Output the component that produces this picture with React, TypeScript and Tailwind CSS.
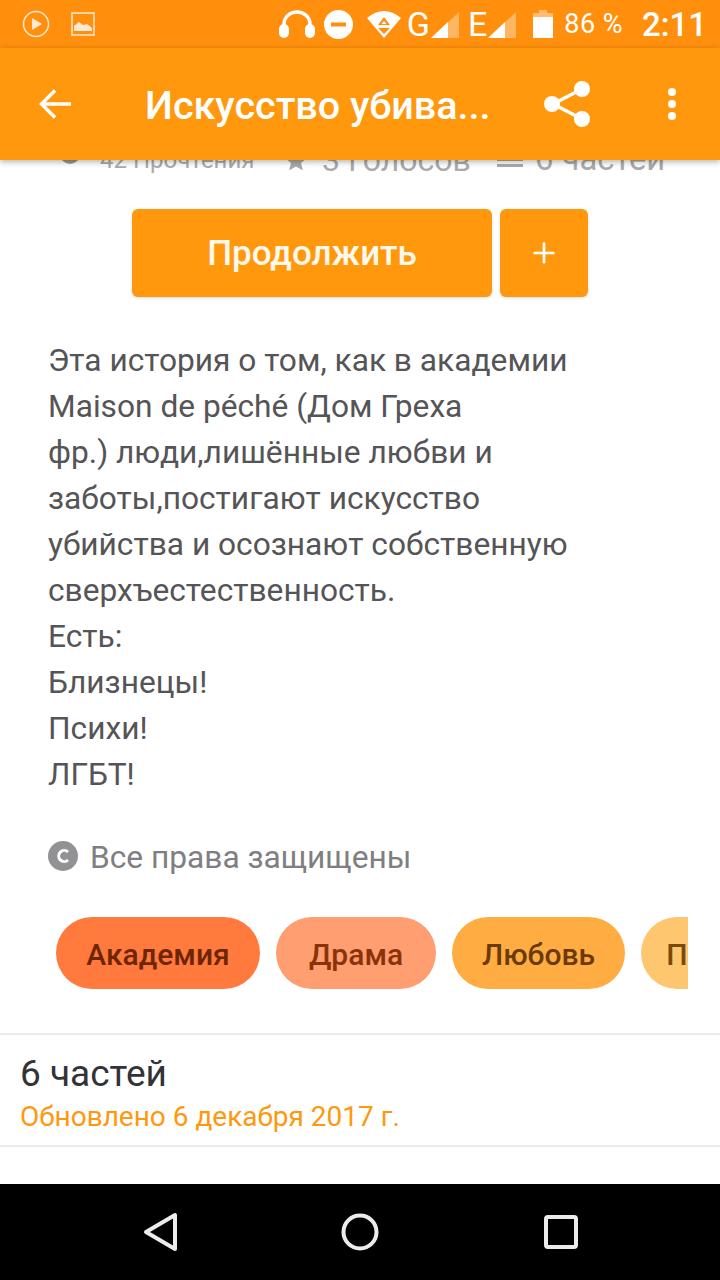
import { Plus } from 'lucide-react'

const tags = [
  { name: 'Академия', className: 'w-[204px] bg-[#ff7a3c] text-[#6e2504]' },
  { name: 'Драма', className: 'w-[160px] bg-[#ff9e70] text-[#8a3208]' },
  { name: 'Любовь', className: 'w-[173px] bg-[#ffad42] text-[#6b3a06]' },
  { name: 'Поцелуи', className: 'w-[172px] bg-[#ffc670] text-[#7a4a0a]' },
]

const description = [
  'Эта история о том, как в академии',
  'Maison de péché (Дом Греха',
  'фр.) люди,лишённые любви и',
  'заботы,постигают искусство',
  'убийства и осознают собственную',
  'сверхъестественность.',
  'Есть:',
  'Близнецы!',
  'Психи!',
  'ЛГБТ!',
]

const SignalIcon = () => (
  <svg width="28" height="26" viewBox="0 0 28 26" className="ml-[1px] mt-[2px] shrink-0">
    <path d="M0 26 L28 0 V26 Z" fill="white" fillOpacity="0.35" />
    <path d="M0 26 L17 10 V26 Z" fill="white" />
  </svg>
)

const StatusBar = () => (
  <div className="flex h-12 shrink-0 items-center whitespace-nowrap bg-[#ff8f0c] pl-[22px] pr-[13px] font-['Roboto',sans-serif] leading-none text-white">
    <svg width="28" height="28" viewBox="0 0 28 28" className="shrink-0">
      <circle cx="14" cy="14" r="12.5" fill="none" stroke="#ffe9d2" strokeWidth="1.5" />
      <path d="M10 8 L20 14 L10 20 Z" fill="#ffe9d2" />
    </svg>
    <svg width="24" height="24" viewBox="0 0 24 24" className="ml-[21px] shrink-0">
      <rect x="1" y="1" width="22" height="22" fill="none" stroke="#ffe9d2" strokeWidth="1.5" />
      <path d="M3 19 V14 L8 10 L12 13 L16 12 L21 16 V19 Z" fill="#ffe9d2" />
    </svg>
    <svg width="36" height="28" viewBox="0 0 36 28" className="ml-auto shrink-0">
      <path d="M5 18 V14 a13 12 0 0 1 26 0 V18" fill="none" stroke="white" strokeWidth="3.5" />
      <rect x="0" y="14" width="10" height="14" rx="5" fill="white" />
      <rect x="26" y="14" width="10" height="14" rx="5" fill="white" />
    </svg>
    <svg width="29" height="29" viewBox="0 0 29 29" className="ml-[9px] shrink-0">
      <circle cx="14.5" cy="14.5" r="14.5" fill="white" />
      <rect x="7" y="12.5" width="15" height="4" fill="#ff8f0c" />
    </svg>
    <svg width="34" height="28" viewBox="0 0 34 28" className="ml-[14px] shrink-0">
      <path d="M0 8 Q17 -6 34 8 L17 28 Z" fill="white" />
      <path d="M17 7 L23 15 H11 Z M11 18 H23 L17 24 Z" fill="#ff8f0c" />
      <path d="M17 11 L19.5 14 H14.5 Z" fill="white" />
    </svg>
    <span className="ml-[6px] text-[34px]">G</span>
    <SignalIcon />
    <span className="ml-[9px] text-[34px]">E</span>
    <SignalIcon />
    <svg width="20" height="28" viewBox="0 0 20 28" className="ml-[17px] shrink-0">
      <path d="M6 0 H14 V3 H20 V28 H0 V3 H6 Z" fill="white" fillOpacity="0.4" />
      <rect x="0" y="7" width="20" height="21" fill="white" />
    </svg>
    <span className="ml-[11px] text-[27px] tracking-[0.5px]">86 %</span>
    <span className="ml-[19px] text-[33px] font-medium">2:11</span>
  </div>
)

const AppBar = () => (
  <div className="relative z-10 flex h-28 shrink-0 items-center bg-[#ff980d] text-white shadow-[0_2px_6px_rgba(0,0,0,0.3)]">
    <svg width="34" height="32" viewBox="0 0 34 32" className="ml-[39px] shrink-0">
      <path d="M32 16 H3 M16 2.5 L2.5 16 L16 29.5" fill="none" stroke="white" strokeWidth="3.5" />
    </svg>
    <h1 className="ml-[72px] w-[350px] whitespace-nowrap pt-[3px] font-['Roboto',sans-serif] text-[39.5px] font-medium">
      Искусство убива...
    </h1>
    <svg width="48" height="48" viewBox="0 0 48 48" className="ml-[49px] shrink-0">
      <path d="M38 9 L9 24 L38 39" fill="none" stroke="white" strokeWidth="3.5" />
      <circle cx="38" cy="9" r="8" fill="white" />
      <circle cx="8" cy="24" r="8" fill="white" />
      <circle cx="38" cy="39" r="8" fill="white" />
    </svg>
    <div className="ml-[76px] flex flex-col gap-[4px]">
      <span className="size-2 rounded-full bg-white" />
      <span className="size-2 rounded-full bg-white" />
      <span className="size-2 rounded-full bg-white" />
    </div>
  </div>
)

// only the bottom of this row shows under the app bar
const Stats = () => (
  <div className="-mt-[20px] flex h-[40px] items-center font-['Roboto',sans-serif] text-[#aaaaaa]">
    <span className="ml-[60px] mb-[12px] size-5 rounded-full bg-[#999999]" />
    <span className="ml-[20px] w-[157px] text-[24px]">42 Прочтения</span>
    <svg width="22" height="22" viewBox="0 0 24 24" fill="#aaaaaa" className="ml-[28px]">
      <path d="M12 1 L15.5 9 L24 9.7 L17.5 15.3 L19.5 23.5 L12 19 L4.5 23.5 L6.5 15.3 L0 9.7 L8.5 9 Z" />
    </svg>
    <span className="ml-[15px] w-[175px] text-[32px]">3 Голосов</span>
    <div className="flex w-[26px] flex-col gap-[3px] pt-[4px]">
      <span className="h-[3px] bg-[#aaaaaa]" />
      <span className="h-[3px] bg-[#aaaaaa]" />
    </div>
    <span className="ml-[12px] text-[32.8px]">6 частей</span>
  </div>
)

const App = () => {
  return (
    <div className="flex h-[1280px] w-[720px] flex-col overflow-hidden bg-white font-['Roboto',sans-serif]">
      <StatusBar />
      <AppBar />

      <main className="flex min-h-0 flex-1 flex-col overflow-hidden">
        <Stats />

        <div className="mt-[29px] flex justify-center gap-2">
          <button className="h-[88px] w-[360px] rounded-[6px] bg-[#ff980d] pt-[3px] text-[35px] font-medium text-[#fff8ec] shadow-[0_1px_3px_rgba(0,0,0,0.15)]">
            Продолжить
          </button>
          <button className="flex h-[88px] w-[88px] items-center justify-center rounded-[6px] bg-[#ff980d] text-white shadow-[0_1px_3px_rgba(0,0,0,0.15)]">
            <Plus size={32} strokeWidth={2} />
          </button>
        </div>

        <div className="mt-[41px] pl-[48px] text-[31.7px] leading-[46px] text-[#555457]">
          {description.map((line) => (
            <div key={line}>{line}</div>
          ))}
        </div>

        <div className="mt-[37px] flex items-center pl-[48px] text-[#7f7e82]">
          <svg width="30" height="30" viewBox="0 0 30 30" className="-mt-[4px]">
            <circle cx="15" cy="15" r="15" fill="#929194" />
            <path d="M20 11 A5.5 5.5 0 1 0 20 19" fill="none" stroke="white" strokeWidth="3" />
          </svg>
          <span className="ml-[12px] text-[31.7px] leading-[46px]">Все права защищены</span>
        </div>

        <div className="mt-[36px] ml-[56px] flex w-[632px] gap-4 overflow-hidden">
          {tags.map((tag) => (
            <div
              key={tag.name}
              className={`flex h-[72px] shrink-0 items-center justify-center rounded-full pt-[2px] text-[30px] font-medium ${tag.className}`}
            >
              {tag.name}
            </div>
          ))}
        </div>

        <div className="mt-[44px] border-y-2 border-[#ececee] pb-[7px] pl-5 pt-[17px]">
          <div className="text-[37px] leading-[44px] text-[#333236]">6 частей</div>
          <div className="text-[28px] leading-[42px] text-[#ff980d]">Обновлено 6 декабря 2017 г.</div>
        </div>
      </main>

      <nav className="flex h-24 shrink-0 items-center justify-center bg-black">
        <svg width="36" height="40" viewBox="0 0 36 40">
          <path d="M32 3 V37 L3 20 Z" fill="none" stroke="#ececec" strokeWidth="4" strokeLinejoin="round" />
        </svg>
        <svg width="38" height="38" viewBox="0 0 38 38" className="ml-[162px]">
          <circle cx="19" cy="19" r="16.5" fill="none" stroke="#ececec" strokeWidth="4" />
        </svg>
        <svg width="34" height="34" viewBox="0 0 34 34" className="ml-[165px]">
          <rect x="2" y="2" width="30" height="30" rx="2" fill="none" stroke="#ececec" strokeWidth="4" />
        </svg>
      </nav>
    </div>
  )
}

export default App
